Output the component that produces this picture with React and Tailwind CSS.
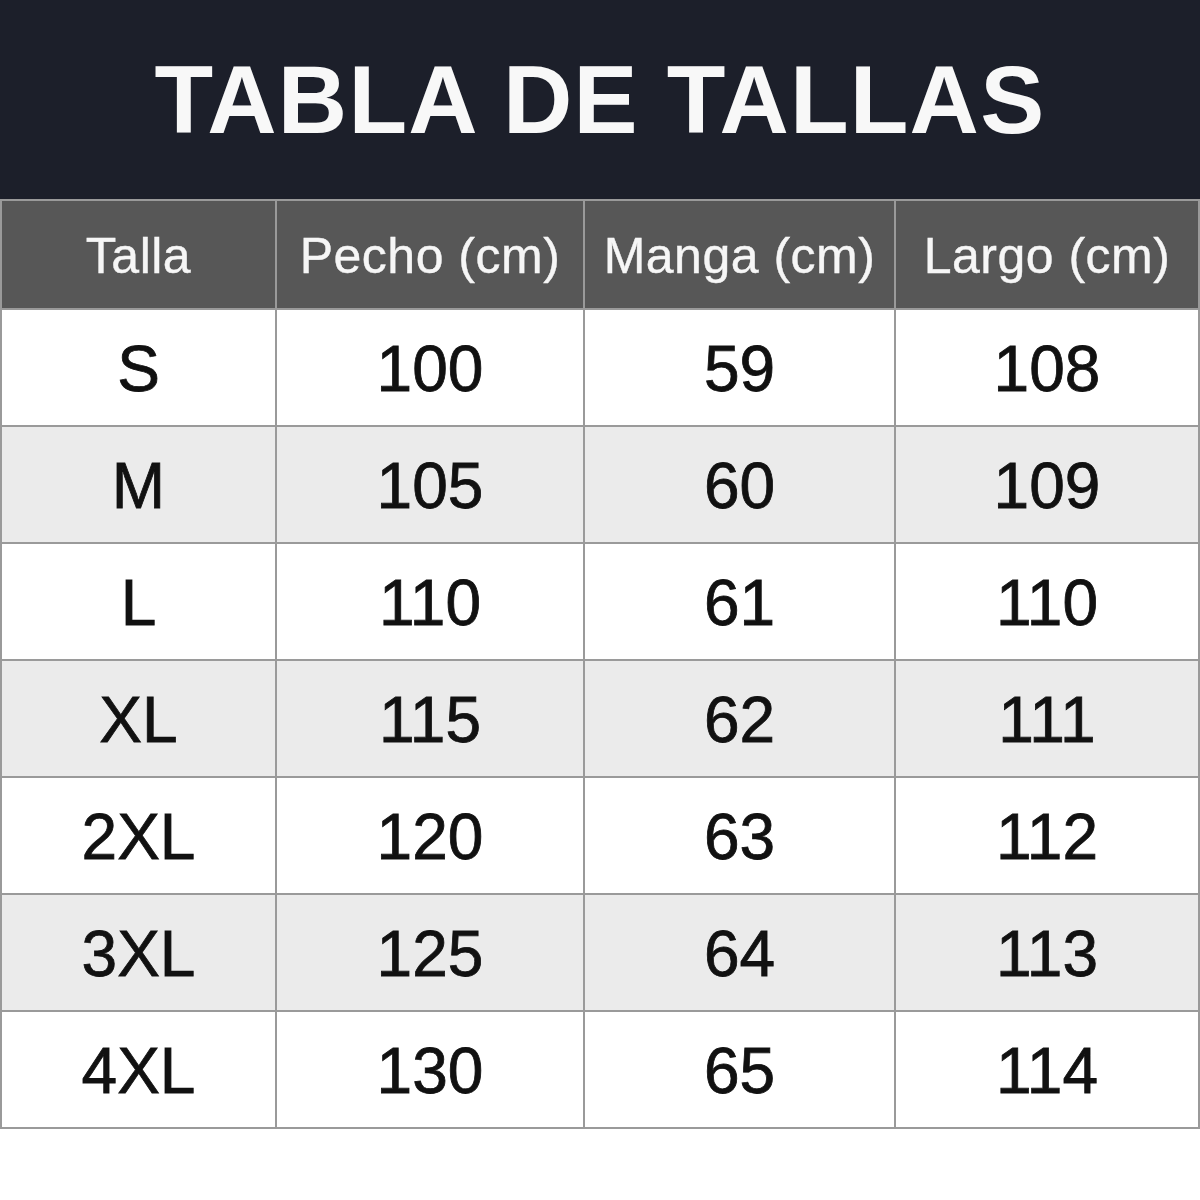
const headers = ["Talla", "Pecho (cm)", "Manga (cm)", "Largo (cm)"];

const rows = [
  ["S", "100", "59", "108"],
  ["M", "105", "60", "109"],
  ["L", "110", "61", "110"],
  ["XL", "115", "62", "111"],
  ["2XL", "120", "63", "112"],
  ["3XL", "125", "64", "113"],
  ["4XL", "130", "65", "114"],
];

export default function App() {
  return (
    <div className="w-[1200px] h-[1200px] bg-white font-['Liberation_Sans',Arial,sans-serif]">
      {/* title bar */}
      <div className="h-[199px] bg-[#1c1f2a] flex items-center justify-center pt-[1px]">
        <h1 className="text-[96px] leading-none font-bold tracking-[1.2px] text-[#f8f8f8]">TABLA DE TALLAS</h1>
      </div>

      {/* size table */}
      <div className="grid grid-cols-[275px_308px_311px_304px] border-t-2 border-l-2 border-[#9a9a9a]">
        {headers.map((h) => (
          <div
            key={h}
            className="h-[109px] flex items-center justify-center pt-[3px] bg-[#575757] border-r-2 border-b-2 border-[#9a9a9a] text-[50px] tracking-[0.5px] text-[#f6f6f6] whitespace-nowrap [-webkit-text-stroke:0.4px_#f6f6f6]"
          >
            {h}
          </div>
        ))}
        {rows.map((row, i) =>
          row.map((cell, j) => (
            <div
              key={`${i}-${j}`}
              className={`h-[117px] flex items-center justify-center pt-[3px] border-r-2 border-b-2 border-[#9a9a9a] text-[64px] text-[#111111] [-webkit-text-stroke:0.8px_#111111] ${
                i % 2 === 1 ? "bg-[#ebebeb]" : "bg-white"
              }`}
            >
              {cell}
            </div>
          ))
        )}
      </div>
    </div>
  );
}
